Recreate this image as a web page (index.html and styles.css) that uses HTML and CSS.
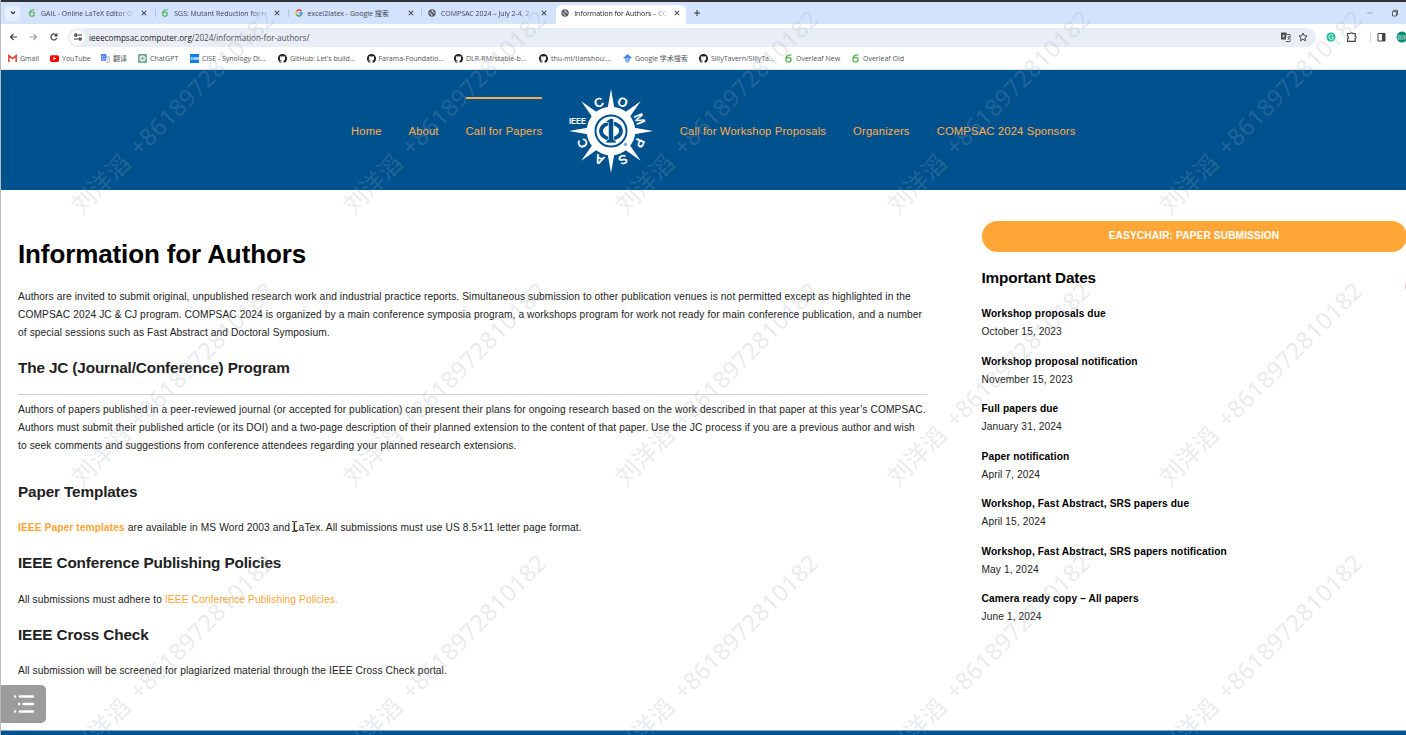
FILE: index.html
```html
<!DOCTYPE html>
<html lang="en">
<head>
<meta charset="utf-8">
<title>Information for Authors – COMPSAC 2024</title>
<link rel="stylesheet" href="styles.css">
</head>
<body>
<svg class="defs" width="0" height="0">
  <defs>
    <symbol id="leaf" viewBox="0 0 16 16"><path d="M13 2C9 1 5 3 4 6c-2 5 0 8.500 3.500 8.500s5-2.500 5-4.700-2-3.700-4.500-3.700-4 2-4 3" fill="none" stroke="#4cae4f" stroke-width="2.200"/></symbol>
    <symbol id="globe" viewBox="0 0 16 16"><circle cx="8" cy="8" r="7.500" fill="#5a5e63"/><path d="M2.500 8l3 .5 1 2 1.500 1-.5 2.500M9 2L7.500 4.500l2.500.5.500 2.500 3 .5" fill="none" stroke="#dfe7f3" stroke-width="1.800"/></symbol>
    <symbol id="close" viewBox="0 0 8 8"><path d="M1 1l6 6M7 1L1 7" stroke="#30343a" stroke-width="1.4"/></symbol>
    <symbol id="github" viewBox="0 0 16 16"><path fill="#1f2328" d="M8 0a8 8 0 0 0-2.5 15.6c.4.1.5-.2.5-.4v-1.5c-2 .5-2.7-.8-2.9-1.4-.3-.5-.6-.9-.9-1 .8-.3 1.500.2 2 1 .6.9 1.400.8 1.900.5.1-.5.3-.9.6-1.100C4.700 11.400 3.400 10.600 3.400 8c0-.9.3-1.600.8-2.200-.2-.7-.1-1.500.1-2.100.8 0 1.500.4 2.100.8a7 7 0 0 1 3.300 0c.7-.4 1.300-.8 2.100-.8.2.6.3 1.400.1 2.100.5.6.8 1.300.8 2.200 0 2.600-1.400 3.400-3.200 3.700.3.300.5.800.5 1.500v2c0 .2.100.5.5.4A8 8 0 0 0 8 0z"/></symbol>
  </defs>
</svg>
<div class="window">
  <div class="tabs">
    <div class="tab-search"><svg width="6" height="4" viewBox="0 0 6 4"><path d="M1 .7l2 2 2-2" fill="none" stroke="#222" stroke-width="1.2"/></svg></div>
    <div class="tab"><svg class="fav"><use href="#leaf"/></svg><span class="tab-title">GAIL - Online LaTeX Editor O</span><svg class="x"><use href="#close"/></svg></div>
    <div class="tab"><svg class="fav"><use href="#leaf"/></svg><span class="tab-title">SGS: Mutant Reduction for H</span><svg class="x"><use href="#close"/></svg></div>
    <div class="tab"><svg class="fav" viewBox="0 0 16 16"><g fill="none" stroke-width="3"><path d="M13 4A6 6 0 0 0 3 5" stroke="#ea4335"/><path d="M3 5a6 6 0 0 0 0 6" stroke="#fbbc05"/><path d="M3 11a6 6 0 0 0 9 1.500" stroke="#34a853"/><path d="M12 12.500A6 6 0 0 0 14 8H8" stroke="#4285f4"/></g></svg><span class="tab-title full">excel2latex - Google 搜索</span><svg class="x"><use href="#close"/></svg></div>
    <div class="tab last"><svg class="fav"><use href="#globe"/></svg><span class="tab-title">COMPSAC 2024 – July 2-4, 2</span><svg class="x"><use href="#close"/></svg></div>
    <div class="tab active"><svg class="fav"><use href="#globe"/></svg><span class="tab-title">Information for Authors – CC</span><svg class="x"><use href="#close"/></svg></div>
    <svg class="plus" viewBox="0 0 8 8"><path d="M4 1v6M1 4h6" stroke="#333" stroke-width="1"/></svg>
    <svg class="winctl" width="34" height="8" viewBox="0 0 34 8"><path d="M1 4h6" stroke="#8d9ab0" stroke-width=".8"/><path d="M26.500 2.500h4v4.500h-4zM27.500 2.500V1.300h4V6h-1" fill="none" stroke="#444" stroke-width=".8"/></svg>
  </div>
  <div class="toolbar">
    <svg class="nav-icons" width="60" height="12" viewBox="0 0 60 12" fill="none" stroke="#3c4043" stroke-width="1.200"><path d="M11 6H4.500M7.500 3l-3 3 3 3"/><path d="M24 6h6.500M27.500 3l3 3-3 3" stroke="#9a9da1"/><path d="M50.500 4.500A3 3 0 1 0 50.700 7M50.900 2.500v2.400h-2.400"/></svg>
    <div class="omnibox">
      <span class="site"><svg width="8" height="8" viewBox="0 0 8 8" fill="none" stroke="#333" stroke-width="1.200"><path d="M3.800 2H8M0 6h4.200"/><circle cx="1.800" cy="2" r="1.100"/><circle cx="6.200" cy="6" r="1.100"/></svg></span>
      <span class="url"><b>ieeecompsac.computer.org</b>/2024/information-for-authors/</span>
      <svg class="omni-icons" width="30" height="12" viewBox="0 0 30 12"><path d="M1 1.500h5.500l1 7H1z" fill="#4b4f54"/><path d="M6.500 3.500H10v7H5.800" fill="#fff" stroke="#4b4f54" stroke-width=".9"/><path d="M2.300 5h2.500M3.500 3.800c.8 2-1 3-1 3" stroke="#fff" stroke-width=".7" fill="none"/><path d="M7 6h2.500M8.500 5v4M7.200 8.700l2-2" stroke="#4b4f54" stroke-width=".6"/><path d="M23 2l1.200 2.700 2.900.3-2.200 1.900.7 2.900L23 8.300l-2.600 1.500.7-2.900L18.900 5l2.900-.3z" fill="none" stroke="#444" stroke-width="1"/></svg>
    </div>
    <svg class="ext" width="90" height="12" viewBox="0 0 90 12"><circle cx="15" cy="6" r="4.500" fill="#15c39a"/><path d="M17 4.300a2.400 2.400 0 1 0 .2 3.300V6.200h-1.500" fill="none" stroke="#fff"/><path d="M31.500 2.500h3a1.200 1.200 0 0 1 2.200 0h2.500v2.700a1.200 1.200 0 0 1 0 2.300v2.800h-7.700V8a1.500 1.500 0 0 0 0-2.800z" fill="none" stroke="#444" stroke-width="1.200"/><path d="M54.500 1.500v9" stroke="#c5d9fb"/><path d="M62 2.500h7v7.500h-7z" fill="none" stroke="#444"/><path d="M66 2.500h3V10h-3z" fill="#444"/><circle cx="86" cy="6" r="5.500" fill="#0a8a70"/><text x="81" y="8" font-family="Noto Sans CJK SC" font-size="4.500" fill="#fff">刘洋</text></svg>
  </div>
  <div class="bookmarks">
    <span><svg viewBox="0 0 16 16"><path d="M1.500 14V3L8 8l6.500-5v11" fill="none" stroke="#e24436" stroke-width="2.800"/></svg>Gmail</span>
    <span><svg viewBox="0 0 16 16"><rect y="2" width="16" height="12" rx="3" fill="#f00"/><path d="M6 5l5 3-5 3z" fill="#fff"/></svg>YouTube</span>
    <span><svg viewBox="0 0 16 16"><path d="M0 0h9l3 12H0z" fill="#4a7de8"/><path d="M9 5h6v10H9" fill="#dce5f5" stroke="#8b9fc9"/><path d="M7 5a3 3 0 1 0 0 3H5" fill="none" stroke="#fff"/></svg>翻译</span>
    <span><svg viewBox="0 0 16 16"><rect width="16" height="16" rx="2" fill="#74aa9c"/><g fill="none" stroke="#fff"><ellipse cx="8" cy="8" rx="3" ry="5.500"/><ellipse cx="8" cy="8" rx="3" ry="5.500" transform="rotate(60 8 8)"/><ellipse cx="8" cy="8" rx="3" ry="5.500" transform="rotate(120 8 8)"/></g></svg>ChatGPT</span>
    <span><svg viewBox="0 0 16 16"><rect width="16" height="16" fill="#087ee8"/><text x="1" y="10.500" font-family="Liberation Sans" font-weight="bold" font-size="6.500" fill="#fff">DSM</text></svg>CISE - Synology Di...</span>
    <span><svg><use href="#github"/></svg>GitHub: Let's build...</span>
    <span><svg><use href="#github"/></svg>Farama-Foundatio...</span>
    <span><svg><use href="#github"/></svg>DLR-RM/stable-b...</span>
    <span><svg><use href="#github"/></svg>thu-ml/tianshou:...</span>
    <span><svg viewBox="0 0 16 16"><path d="M8 0l8 7-4 1v4l-4 4-4-4V8L0 7z" fill="#4b83ed"/><path d="M4 9c2-3 6-3 8 0v3l-4 4-4-4z" fill="#89b2f8"/></svg>Google 学术搜索</span>
    <span><svg><use href="#github"/></svg>SillyTavern/SillyTa...</span>
    <span><svg><use href="#leaf"/></svg>Overleaf New</span>
    <span><svg><use href="#leaf"/></svg>Overleaf Old</span>
  </div>

  <header class="site-header">
    <nav class="menu left"><a>Home</a><a>About</a><a class="current">Call for Papers</a></nav>
    <svg class="logo" width="88" height="88" viewBox="-44 -44 88 88">
      <g fill="#fff">
        <path id="ray" d="M-3.500-22L0-42 3.500-22z"/><use href="#ray" transform="rotate(45)"/><use href="#ray" transform="rotate(90)"/><use href="#ray" transform="rotate(135)"/><use href="#ray" transform="rotate(180)"/><use href="#ray" transform="rotate(225)"/><use href="#ray" transform="rotate(270)"/><use href="#ray" transform="rotate(315)"/>
        <circle r="24.300"/>
      </g>
      <g fill="none" stroke="#00528f"><circle r="15.500" stroke-width="2"/><ellipse rx="10" ry="7.800" stroke-width="3.800"/></g>
      <path d="M-5-9.500L-1-12.500H2.600V8.500L5 9.800V12H-5V9.800L-2.600 8.500V-8.500H-5z" fill="#00528f" stroke="#fff" stroke-width=".7"/>
      <circle cx="14.500" cy="13.500" r="1.800" fill="#7facd0"/>
      <g class="logo-letters">
        <text y="-26.500" transform="rotate(-23)">C</text><text y="-26.500" transform="rotate(22)">O</text><text y="-26.500" transform="rotate(67)">M</text><text y="-26.500" transform="rotate(113)">P</text><text y="-26.500" transform="rotate(157)">S</text><text y="-26.500" transform="rotate(202)">A</text><text y="-26.500" transform="rotate(247)">C</text>
        <text class="ieee" x="-33.500" y="-7.500" textLength="17" lengthAdjust="spacingAndGlyphs">IEEE</text>
      </g>
    </svg>
    <nav class="menu right"><a>Call for Workshop Proposals</a><a>Organizers</a><a>COMPSAC 2024 Sponsors</a></nav>
  </header>

  <main class="content">
    <article class="main-col">
      <h1>Information for Authors</h1>
      <p>Authors are invited to submit original, unpublished research work and industrial practice reports. Simultaneous submission to other publication venues is not permitted except as highlighted in the<br>COMPSAC 2024 JC &amp; CJ program. COMPSAC 2024 is organized by a main conference symposia program, a workshops program for work not ready for main conference publication, and a number<br>of special sessions such as Fast Abstract and Doctoral Symposium.</p>
      <h2 class="jc">The JC (Journal/Conference) Program</h2>
      <hr>
      <p>Authors of papers published in a peer-reviewed journal (or accepted for publication) can present their plans for ongoing research based on the work described in that paper at this year’s COMPSAC.<br>Authors must submit their published article (or its DOI) and a two-page description of their planned extension to the content of that paper. Use the JC process if you are a previous author and wish<br>to seek comments and suggestions from conference attendees regarding your planned research extensions.</p>
      <h2 class="pt">Paper Templates</h2>
      <p><a class="strong">IEEE Paper templates</a> are available in MS Word 2003 and LaTex. All submissions must use US 8.5×11 letter page format.</p>
      <h2>IEEE Conference Publishing Policies</h2>
      <p>All submissions must adhere to <a>IEEE Conference Publishing Policies.</a></p>
      <h2>IEEE Cross Check</h2>
      <p>All submission will be screened for plagiarized material through the IEEE Cross Check portal.</p>
    </article>
    <aside class="side-col">
      <a class="button">EASYCHAIR: PAPER SUBMISSION</a>
      <h2>Important Dates</h2>
      <dl>
        <dt>Workshop proposals due</dt><dd>October 15, 2023</dd>
        <dt>Workshop proposal notification</dt><dd>November 15, 2023</dd>
        <dt>Full papers due</dt><dd>January 31, 2024</dd>
        <dt>Paper notification</dt><dd>April 7, 2024</dd>
        <dt>Workshop, Fast Abstract, SRS papers due</dt><dd>April 15, 2024</dd>
        <dt>Workshop, Fast Abstract, SRS papers notification</dt><dd>May 1, 2024</dd>
        <dt>Camera ready copy – All papers</dt><dd>June 1, 2024</dd>
      </dl>
    </aside>
  </main>
  <footer class="site-footer"></footer>
</div>
<div class="outline-button"><svg width="22" height="20" viewBox="0 0 22 20" stroke="#fff" stroke-width="2.400" stroke-linecap="round"><path d="M2 2.500h.1M7 2.500h13M6 10h.1M10.500 10H20M2 17.500h.1M7 17.500h13"/></svg></div>
<svg class="cursor" width="7" height="11" viewBox="0 0 7 11"><path d="M1 .6h2l.5.400.5-.400h2M3.500 1v9M1 10.400h2l.5-.400.5.400h2" fill="none" stroke="#222" stroke-width="1"/></svg>
<div class="edge-dot"></div>
<svg class="watermark" width="1406" height="735">
  <defs><text id="mark" x="-137" y="9" textLength="275">刘洋滔 +8618972810182</text></defs>
  <g id="row"><use href="#mark" transform="translate(172 112) rotate(-45)"/><use href="#mark" transform="translate(444 112) rotate(-45)"/><use href="#mark" transform="translate(716 112) rotate(-45)"/><use href="#mark" transform="translate(988 112) rotate(-45)"/><use href="#mark" transform="translate(1260 112) rotate(-45)"/></g>
  <use href="#row" y="272"/><use href="#row" y="544"/>
</svg>
</body>
</html>
```
FILE: styles.css
```css
* { box-sizing: border-box; }
body { margin: 0; height: 735px; overflow: hidden; position: relative; background: #fff; font-family: "Liberation Sans", Arial, sans-serif; color: #222; }
.defs { position: absolute; }
.window { height: 735px; display: flex; flex-direction: column; border-left: 1px solid #b9b9b9; }

.tabs { flex: none; height: 24px; border-top: 2px solid #303236; background: #d3e3fd; display: flex; align-items: center; font: 7px "Open Sans", "Noto Sans CJK SC", sans-serif; color: #3e4450; }
.tab-search { width: 15px; height: 15px; margin: 0 8px 0 4px; border-radius: 4px; background: #e6effd; display: flex; align-items: center; justify-content: center; }
.tab { width: 133.300px; height: 16px; display: flex; align-items: center; position: relative; }
.tab::after { content: ""; position: absolute; right: 5.500px; width: 1px; height: 8px; background: #a9c3ee; }
.tab.last::after, .tab.active::after { display: none; }
.fav { width: 8px; height: 8px; margin-right: 5px; flex: none; }
.tab-title { width: 98px; flex: none; letter-spacing: -.03px; white-space: nowrap; -webkit-mask-image: linear-gradient(to right, #000 78%, transparent 98%); mask-image: linear-gradient(to right, #000 78%, transparent 98%); }
.tab-title.full { letter-spacing: 0; -webkit-mask-image: none; mask-image: none; }
.x { width: 6px; height: 6px; margin-left: 2px; flex: none; }
.tab.active { width: 130px; height: 19px; margin: 3px 0 0 -5px; padding: 0 0 3px 5px; background: #fff; border-radius: 6px 6px 0 0; color: #222; }
.plus { width: 8px; height: 8px; margin-left: 7px; }
.winctl { margin-left: auto; margin-right: 6px; }

.toolbar { flex: none; height: 25px; padding-top: 1px; display: flex; align-items: center; }
.nav-icons { margin-left: 5px; }
.omnibox { width: 1248px; height: 19px; margin-left: 2px; border-radius: 10px; background: #e9eef6; display: flex; align-items: center; font: 8.100px "Open Sans", sans-serif; color: #4b4f55; }
.site { width: 15px; height: 15px; margin-left: 2px; border-radius: 50%; background: #fff; display: flex; align-items: center; justify-content: center; }
.url { margin-left: 4px; }
.url b { font-weight: 400; color: #1f2023; }
.omni-icons { margin-left: auto; margin-right: 6px; }

.bookmarks { flex: none; height: 21px; padding: 1px 0 3px 7px; border-bottom: 1px solid #dce3ea; display: grid; grid-template-columns: 42px 51px 37px 52px 88px 88.500px 87.500px 85px 84px 76px 85px 67px 60px; align-items: center; font: 7px "Open Sans", "Noto Sans CJK SC", sans-serif; color: #50545a; white-space: nowrap; }
.bookmarks span { display: flex; align-items: center; gap: 3px; }
.bookmarks svg { width: 9px; height: 9px; flex: none; }

.site-header { flex: none; height: 120px; background: #00528f; display: flex; align-items: center; }
.menu { display: flex; height: 66px; align-items: center; font-size: 11.250px; letter-spacing: .15px; color: #ffac45; white-space: nowrap; }
.menu a { height: 66px; line-height: 64px; border-top: 2px solid transparent; }
.menu a.current { border-top-color: #f0ae50; }
.menu.left { margin-left: 350px; gap: 26.900px; }
.logo { margin: 2px 0 0 24.500px; }
.menu.right { margin-left: 25px; gap: 27px; }
.logo-letters { fill: #fff; font: bold 13px "Liberation Sans", sans-serif; text-anchor: middle; }
.logo-letters .ieee { font-size: 8.500px; }

.content { flex: 1; min-height: 0; display: grid; grid-template-columns: 908.500px 425px; column-gap: 55px; padding-left: 17px; font-size: 10.200px; line-height: 18px; letter-spacing: .1px; }
.main-col { white-space: nowrap; }
h1 { margin: 48px 0 18px; font-size: 26px; line-height: 32px; letter-spacing: -.12px; color: #000; }
p { margin: 0; line-height: 18.100px; }
h2 { margin: 0; font-size: 15.300px; line-height: 22px; letter-spacing: -.13px; }
.main-col h2 { margin: 14.800px 0 16.500px; }
.main-col h2.jc { margin-bottom: 15.200px; }
hr { margin: 0 0 6px; border: 0; height: 1px; background: #cfcfcf; }
.main-col h2.pt { margin-top: 25.200px; }
.main-col a { color: #ffa433; }
.main-col a.strong { font-weight: 700; }
.side-col .button { display: block; height: 31px; margin-top: 31px; border-radius: 16px; background: #ffa636; color: #fff; font-weight: 700; line-height: 30px; text-align: center; }
.side-col h2 { margin: 15px 0 16.400px; color: #000; }
dl { margin: 0; }
dt { font-weight: 700; color: #000; }
dd { margin: 0 0 11.450px; }
.site-footer { flex: none; height: 5px; background: #00528f; border-top: 1px solid #7fa8c7; }

.outline-button { position: absolute; left: 1px; top: 685px; width: 45px; height: 38px; border-radius: 0 5px 5px 0; background: #9b9c9e; display: flex; align-items: center; justify-content: center; }
.cursor { position: absolute; left: 291px; top: 521px; }
.edge-dot { position: absolute; left: 1404.500px; top: 281px; width: 12px; height: 12px; border-radius: 50%; background: #f9b9c8; }
.watermark { position: absolute; left: 0; top: 0; pointer-events: none; font: 23.500px "Noto Sans", "Noto Sans CJK SC", sans-serif; word-spacing: 4px; fill: rgba(155, 165, 185, .24); }
```
